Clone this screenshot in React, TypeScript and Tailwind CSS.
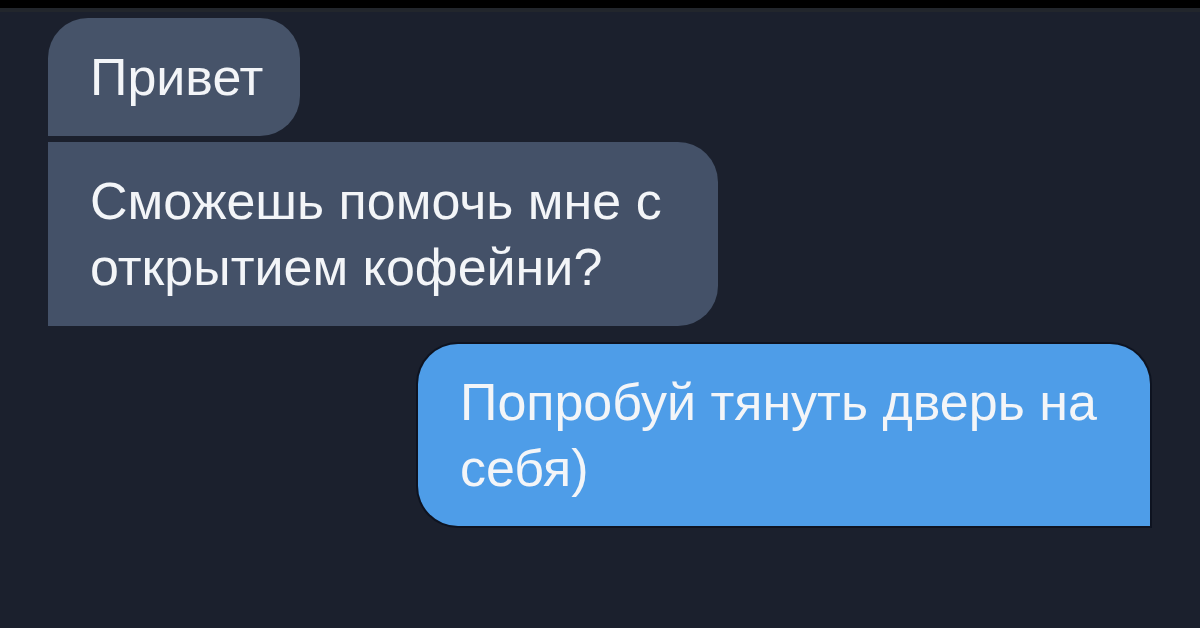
export default function App() {
  return (
    <div className="w-[1200px] h-[628px] bg-[#1b202d] flex flex-col overflow-hidden font-['Liberation_Sans',Arial,sans-serif] text-[52px] leading-[66px] text-[#f3f5f8]">
      <div className="h-[8px] bg-black shrink-0" />
      <div className="h-[4px] bg-[#22262c] shrink-0" />

      <div className="flex flex-col pl-[48px] pt-[6px]">
        <div className="w-[252px] bg-[#465369] rounded-t-[40px] rounded-br-[40px] pl-[42px] py-[26px]">
          Привет
        </div>
        <div className="w-[670px] mt-[6px] bg-[#445168] rounded-r-[40px] pl-[42px] py-[26px]">
          Сможешь помочь мне с<br />
          открытием кофейни?
        </div>
      </div>

      <div className="flex justify-end pr-[50px] mt-[18px]">
        <div className="w-[732px] bg-[#4e9de8] rounded-t-[40px] rounded-bl-[40px] pl-[42px] py-[25px] ring-2 ring-[#0e1320]">
          Попробуй тянуть дверь на<br />
          себя)
        </div>
      </div>
    </div>
  );
}
